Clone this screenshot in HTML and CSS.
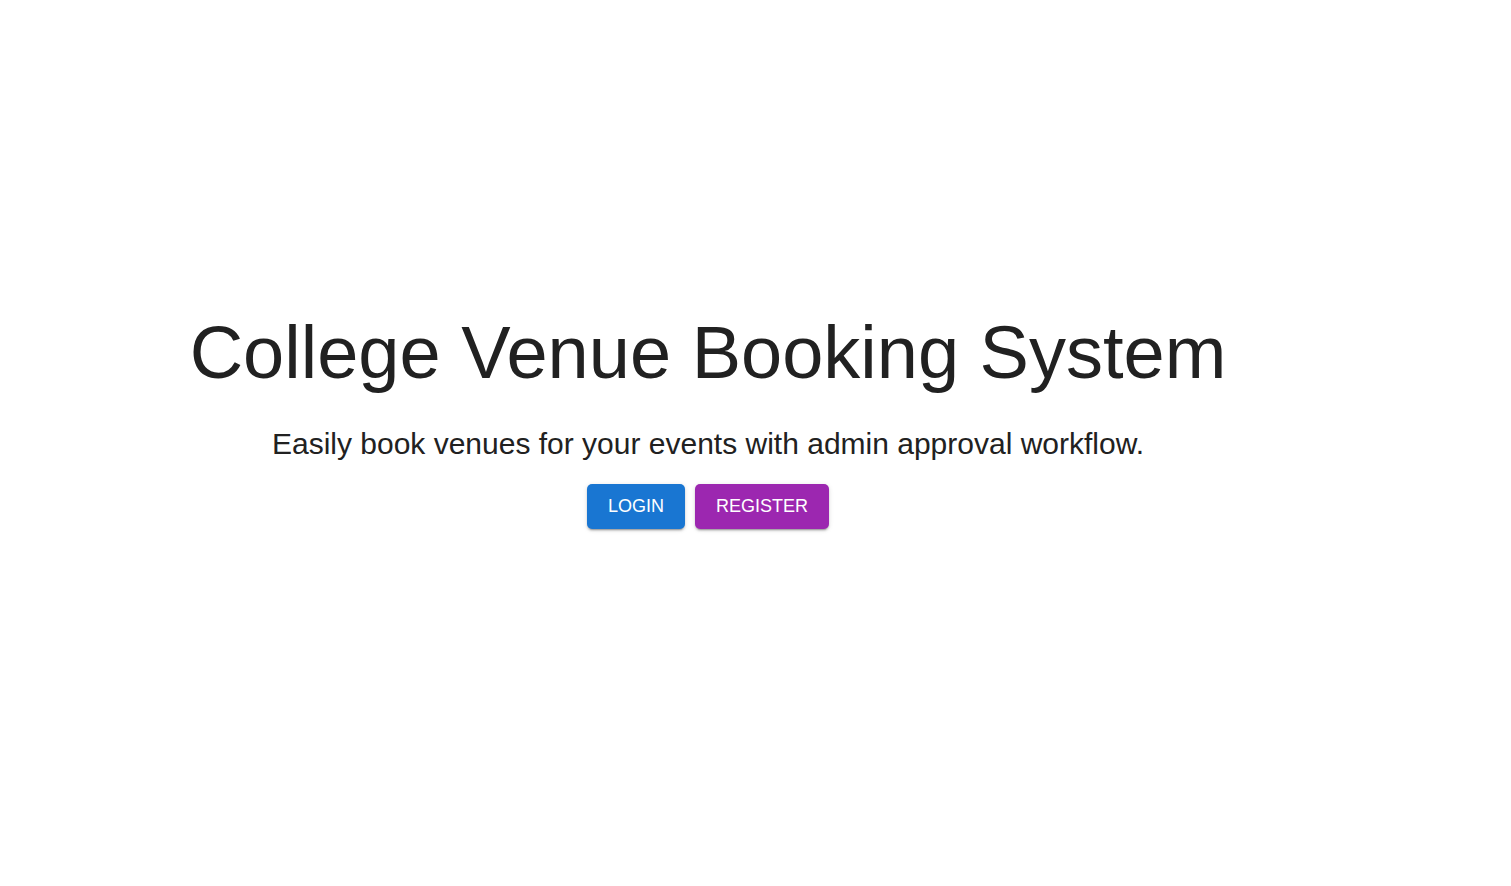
FILE: index.html
```html
<!DOCTYPE html>
<html lang="en">
<head>
<meta charset="utf-8">
<title>College Venue Booking System</title>
<link rel="stylesheet" href="styles.css">
</head>
<body>
<main class="hero">
  <h1 class="hero-title">College Venue Booking System</h1>
  <p class="hero-subtitle">Easily book venues for your events with admin approval workflow.</p>
  <div class="hero-actions">
    <button class="button button-primary" type="button">Login</button>
    <button class="button button-secondary" type="button">Register</button>
  </div>
</main>
</body>
</html>
```

FILE: styles.css
```css
* {
  box-sizing: border-box;
}

body {
  margin: 0;
  background: #fff;
  font-family: "Liberation Sans", Arial, sans-serif;
}

.hero {
  display: flex;
  flex-direction: column;
  align-items: center;
  justify-content: center;
  min-height: 100vh;
  padding: 0 95px 50px 0;
  color: #212121;
  text-align: center;
}

.hero-title {
  margin: 0 0 26px;
  font-size: 74px;
  font-weight: 400;
  line-height: 90px;
}

.hero-subtitle {
  margin: 0 0 20px;
  font-size: 30px;
  line-height: 40px;
}

.hero-actions {
  display: flex;
  gap: 10px;
}

.button {
  padding: 11px 21px;
  border: 0;
  border-radius: 5px;
  color: #fff;
  font-family: inherit;
  font-size: 18px;
  line-height: 23px;
  text-transform: uppercase;
  cursor: pointer;
  box-shadow: 0 3px 1px -2px rgba(0, 0, 0, 0.2), 0 2px 2px 0 rgba(0, 0, 0, 0.14), 0 1px 5px 0 rgba(0, 0, 0, 0.12);
}

.button-primary {
  background: #1976d2;
}

.button-secondary {
  background: #9c27b0;
}
```
